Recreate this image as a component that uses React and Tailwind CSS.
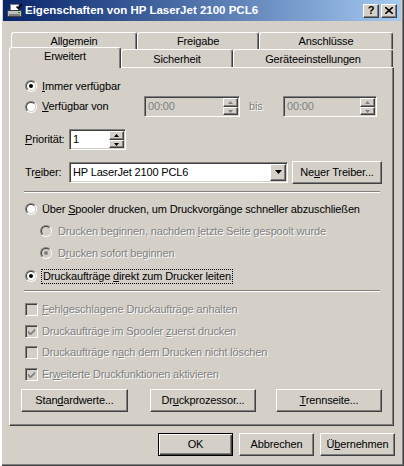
import React from "react";

const raised =
  "border border-t-white border-l-white border-r-[#404040] border-b-[#404040] shadow-[inset_-1px_-1px_#808080]";
const sunken =
  "border border-t-[#808080] border-l-[#808080] border-r-white border-b-white shadow-[inset_1px_1px_#404040,inset_-1px_-1px_#D4D0C8]";
const grayText = "text-[#808080] [text-shadow:1px_1px_#fff]";

function U({ children }) {
  return <span className="underline underline-offset-[1px]">{children}</span>;
}

function Radio({ checked, disabled }) {
  return (
    <span className="flex w-[12px] h-[12px] shrink-0 rounded-full border border-t-[#808080] border-l-[#808080] border-r-white border-b-white">
      <span
        className={`flex flex-1 items-center justify-center rounded-full border border-t-[#404040] border-l-[#404040] border-r-[#D4D0C8] border-b-[#D4D0C8] ${
          disabled ? "bg-[#D4D0C8]" : "bg-white"
        }`}
      >
        {checked && (
          <span
            className={`w-[4px] h-[4px] rounded-full ${
              disabled ? "bg-[#808080]" : "bg-black"
            }`}
          />
        )}
      </span>
    </span>
  );
}

function Check({ checked }) {
  return (
    <span
      className={`flex w-[13px] h-[13px] shrink-0 items-center justify-center bg-[#D4D0C8] ${sunken}`}
    >
      {checked && (
        <svg width="7" height="7" viewBox="0 0 7 7">
          <path d="M0 2.5 L2.5 5 L7 0.5 V3 L2.5 7.5 L0 5 Z" fill="#808080" />
        </svg>
      )}
    </span>
  );
}

function Arrow({ up, color = "#808080" }) {
  return (
    <svg width="5" height="3" viewBox="0 0 5 3">
      <path d={up ? "M2.5 0 L5 3 L0 3 Z" : "M0 0 L5 0 L2.5 3 Z"} fill={color} />
    </svg>
  );
}

function Spin({ disabled }) {
  const c = disabled ? "#808080" : "#000";
  return (
    <span className="flex flex-col w-[15px]">
      <span className={`flex h-[9px] items-center justify-center bg-[#D4D0C8] ${raised}`}>
        <Arrow up color={c} />
      </span>
      <span className={`flex h-[8px] items-center justify-center bg-[#D4D0C8] ${raised}`}>
        <Arrow color={c} />
      </span>
    </span>
  );
}

function TimeBox({ w }) {
  return (
    <div className={`flex h-[21px] p-[1px] bg-[#D4D0C8] ${sunken} ${w}`}>
      <span className="flex-1 pl-[2px] leading-[17px] text-[#808080]">00:00</span>
      <Spin disabled />
    </div>
  );
}

function Button({ children, w = "w-[75px]", def }) {
  if (def) {
    return (
      <button
        className={`h-[23px] ${w} border border-black bg-[#D4D0C8] shadow-[inset_1px_1px_#fff,inset_-1px_-1px_#404040,inset_-2px_-2px_#808080]`}
      >
        {children}
      </button>
    );
  }
  return (
    <button className={`h-[23px] ${w} bg-[#D4D0C8] ${raised}`}>{children}</button>
  );
}

function Tab({ label, w, selected }) {
  return (
    <div
      className={`flex items-center justify-center bg-[#D4D0C8] border-t border-l border-r border-t-white border-l-white border-r-[#404040] rounded-t-[3px] shadow-[inset_-1px_0_#808080] ${w} ${
        selected ? "relative z-10 -mt-[2px] h-[21px] pb-[3px]" : "h-full pt-[1px]"
      }`}
    >
      {label}
    </div>
  );
}

function PrinterIcon() {
  return (
    <svg width="16" height="16" viewBox="0 0 16 16">
      <rect x="3.5" y="1.5" width="8" height="6" fill="#fff" stroke="#808080" />
      <rect x="0.5" y="7.5" width="14" height="6" fill="#C0C0C0" stroke="#404040" />
      <rect x="2" y="11" width="11" height="2" fill="#808080" />
      <rect x="11" y="9" width="2" height="1" fill="#00A000" />
      <path d="M9.5 3.5 L11.5 5.5 L15 1" stroke="#000" strokeWidth="1.6" fill="none" />
    </svg>
  );
}

export default function App() {
  return (
    <div className="w-[404px] h-[466px] overflow-hidden bg-[#D4D0C8] font-['Liberation_Sans',Arial,sans-serif] text-[11px] tracking-[-0.15px] leading-none text-black shadow-[inset_2px_0_#fff,inset_-1px_-1px_#404040,inset_-2px_-2px_#808080] px-[3px] pb-[3px] flex flex-col">
      {/* Title bar */}
      <div className="flex h-[21px] items-center bg-linear-to-r from-[#0A246A] to-[#A6CAF0] pl-[4px] pr-[4px]">
        <PrinterIcon />
        <span className="text-white font-bold text-[11.5px] tracking-normal ml-[2px]">
          Eigenschaften von HP LaserJet 2100 PCL6
        </span>
        <div className="ml-auto flex gap-[2px]">
          <span
            className={`flex w-[16px] h-[14px] items-center justify-center bg-[#D4D0C8] font-bold text-[11px] ${raised}`}
          >
            ?
          </span>
          <span
            className={`flex w-[16px] h-[14px] items-center justify-center bg-[#D4D0C8] ${raised}`}
          >
            <svg width="8" height="7" viewBox="0 0 8 7">
              <path d="M0 0 L8 7 M8 0 L0 7" stroke="#000" strokeWidth="1.6" />
            </svg>
          </span>
        </div>
      </div>

      {/* Tabs */}
      <div className="mt-[11px] ml-[6px] w-[385px]">
        <div className="flex h-[17px] pl-[2px]">
          <Tab label="Allgemein" w="w-[126px]" />
          <Tab label="Freigabe" w="w-[122px]" />
          <Tab label="Anschlüsse" w="w-[134px]" />
        </div>
        <div className="flex h-[18px]">
          <Tab label="Erweitert" w="w-[112px]" selected />
          <Tab label="Sicherheit" w="w-[112px]" />
          <Tab label="Geräteeinstellungen" w="w-[160px]" />
        </div>
      </div>

      {/* Panel */}
      <div className="relative ml-[6px] w-[385px] h-[359px] border border-t-white border-l-white border-r-[#404040] border-b-[#404040] shadow-[inset_-1px_-1px_#808080] pl-[15px] pt-[10px] flex flex-col">
        <div className="flex h-[16px] items-center gap-[5px]">
          <Radio checked />
          <span>
            <U>I</U>mmer verfügbar
          </span>
        </div>

        <div className="mt-[2px] flex h-[21px] items-center">
          <div className="flex w-[119px] items-center gap-[5px]">
            <Radio />
            <span>
              <U>V</U>erfügbar von
            </span>
          </div>
          <TimeBox w="w-[96px]" />
          <span className={`ml-[9px] w-[34px] ${grayText}`}>bis</span>
          <TimeBox w="w-[94px]" />
        </div>

        <div className="mt-[12px] flex h-[21px] items-center">
          <span className="w-[44px]">
            <U>P</U>riorität:
          </span>
          <div className={`flex w-[57px] h-[21px] p-[1px] bg-white ${sunken}`}>
            <span className="flex-1 pl-[2px] leading-[17px]">1</span>
            <Spin />
          </div>
        </div>

        <div className="mt-[10px] flex h-[24px] items-center">
          <span className="w-[44px]">
            Tr<U>e</U>iber:
          </span>
          <div className={`flex w-[219px] h-[21px] p-[1px] bg-white ${sunken}`}>
            <span className="flex-1 pl-[2px] leading-[17px]">HP LaserJet 2100 PCL6</span>
            <span
              className={`flex w-[16px] items-center justify-center bg-[#D4D0C8] ${raised}`}
            >
              <svg width="7" height="4" viewBox="0 0 7 4">
                <path d="M0 0 L7 0 L3.5 4 Z" fill="#000" />
              </svg>
            </span>
          </div>
          <div className="ml-[4px]">
            <Button w="w-[90px]">
              Ne<U>u</U>er Treiber...
            </Button>
          </div>
        </div>

        <div className="mt-[7px] -ml-[1px] w-[356px] h-[2px] border-t border-t-[#808080] border-b border-b-white" />

        <div className="mt-[8px] flex h-[16px] items-center gap-[5px]">
          <Radio />
          <span>
            Über <U>S</U>pooler drucken, um Druckvorgänge schneller abzuschließen
          </span>
        </div>

        <div className="mt-[6px] ml-[15px] flex h-[16px] items-center gap-[6px]">
          <Radio disabled />
          <span className={grayText}>
            Drucken beginnen, nachdem <U>l</U>etzte Seite gespoolt wurde
          </span>
        </div>

        <div className="mt-[6px] ml-[15px] flex h-[16px] items-center gap-[6px]">
          <Radio checked disabled />
          <span className={grayText}>
            D<U>r</U>ucken sofort beginnen
          </span>
        </div>

        <div className="mt-[7px] flex h-[16px] items-center gap-[4px]">
          <Radio checked />
          <span className="border border-dotted border-black px-[1px] py-[1px]">
            Druckaufträge <U>d</U>irekt zum Drucker leiten
          </span>
        </div>

        <div className="mt-[6px] -ml-[1px] w-[356px] h-[2px] border-t border-t-[#808080] border-b border-b-white" />

        <div className="mt-[9px] flex h-[16px] items-center gap-[4px]">
          <Check />
          <span className={grayText}>
            <U>F</U>ehlgeschlagene Druckaufträge anhalten
          </span>
        </div>
        <div className="mt-[6px] flex h-[16px] items-center gap-[4px]">
          <Check checked />
          <span className={grayText}>
            Druckaufträge im Spooler <U>z</U>uerst drucken
          </span>
        </div>
        <div className="mt-[5px] flex h-[16px] items-center gap-[4px]">
          <Check />
          <span className={grayText}>
            Druckaufträge n<U>a</U>ch dem Drucken nicht löschen
          </span>
        </div>
        <div className="mt-[6px] flex h-[16px] items-center gap-[4px]">
          <Check checked />
          <span className={grayText}>
            Er<U>w</U>eiterte Druckfunktionen aktivieren
          </span>
        </div>

        <div className="mt-[7px] -ml-[4px] flex">
          <Button w="w-[107px]">
            Stan<U>d</U>ardwerte...
          </Button>
          <div className="ml-[22px]">
            <Button w="w-[106px]">
              Dr<U>u</U>ckprozessor...
            </Button>
          </div>
          <div className="ml-[20px]">
            <Button w="w-[106px]">
              <U>T</U>rennseite...
            </Button>
          </div>
        </div>
      </div>

      {/* Dialog buttons */}
      <div className="mt-[7px] flex justify-end gap-[6px] pr-[6px]">
        <Button def>OK</Button>
        <Button>Abbrechen</Button>
        <Button>
          Ü<U>b</U>ernehmen
        </Button>
      </div>
    </div>
  );
}
